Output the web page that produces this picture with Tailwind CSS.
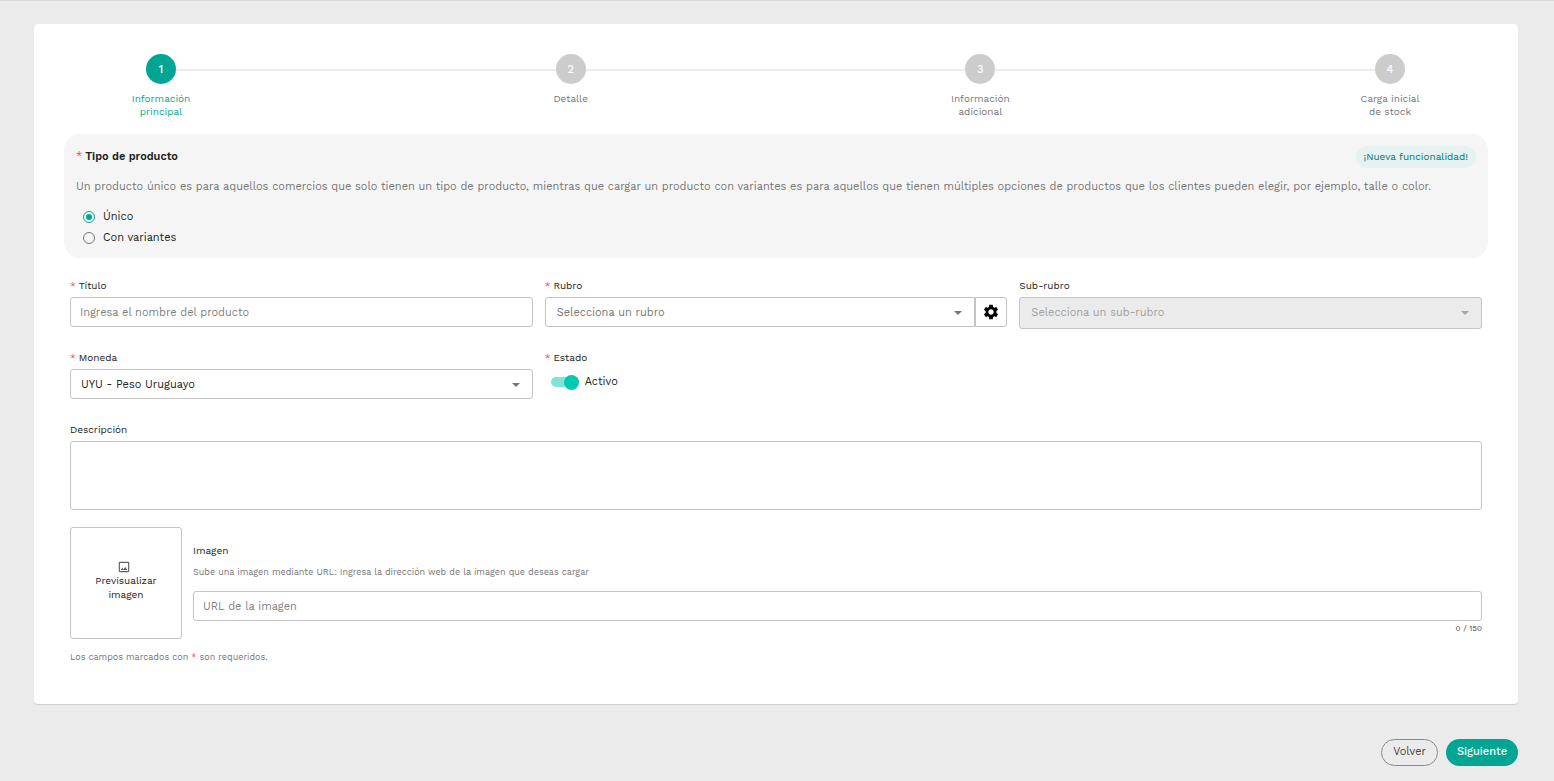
<!DOCTYPE html>
<html lang="es">
<head>
    <meta charset="UTF-8">
    <meta name="viewport" content="width=device-width, initial-scale=1.0">
    <title>Nuevo producto</title>
    <script src="https://cdn.jsdelivr.net/npm/@tailwindcss/browser@4"></script>
</head>
<body class="min-h-screen border-t border-[#dcdcdc] bg-[#ebebeb] pt-[23px] pr-9 pb-[15px] pl-[34px] font-['Work_Sans',Inter,sans-serif] text-[11px] leading-4 text-[#212121]">
    <form>
        <main class="rounded-[4px] bg-white px-[30px] pt-[30px] pb-[39px] shadow-[0_1px_1px_#cfcfcf]">
            <!-- Stepper -->
            <ol class="flex h-20 items-start pr-[66px] pl-[65px] text-center text-[10px] leading-[13px] text-[#757575]">
                <li class="flex w-16 flex-col items-center gap-2 text-[#00a693]" aria-current="step">
                    <span class="flex size-[30px] items-center justify-center rounded-full bg-[#00a693] text-[11px] font-medium text-white">1</span>
                    <span>Información principal</span>
                </li>
                <li class="-mx-[17px] mt-[15px] h-[2px] flex-1 bg-[#ebebf0]" aria-hidden="true"></li>
                <li class="flex w-16 flex-col items-center gap-2">
                    <span class="flex size-[30px] items-center justify-center rounded-full bg-[#cccccc] text-[11px] font-medium text-white">2</span>
                    <span>Detalle</span>
                </li>
                <li class="-mx-[17px] mt-[15px] h-[2px] flex-1 bg-[#ebebf0]" aria-hidden="true"></li>
                <li class="flex w-16 flex-col items-center gap-2">
                    <span class="flex size-[30px] items-center justify-center rounded-full bg-[#cccccc] text-[11px] font-medium text-white">3</span>
                    <span>Información adicional</span>
                </li>
                <li class="-mx-[17px] mt-[15px] h-[2px] flex-1 bg-[#ebebf0]" aria-hidden="true"></li>
                <li class="flex w-16 flex-col items-center gap-2">
                    <span class="flex size-[30px] items-center justify-center rounded-full bg-[#cccccc] text-[11px] font-medium text-white">4</span>
                    <span>Carga inicial de stock</span>
                </li>
            </ol>

            <!-- Tipo de producto -->
            <section class="rounded-2xl bg-[#f5f5f5] p-3">
                <div class="flex items-center justify-between">
                    <h2 class="font-semibold"><span class="mr-[3px] font-normal text-[#f5365c]">*</span>Tipo de producto</h2>
                    <span class="rounded-full bg-[#e5f2f1] px-2 py-[3px] text-[10px] text-[#00796b]">¡Nueva funcionalidad!</span>
                </div>
                <p class="mt-[11px] text-[#757575]">Un producto único es para aquellos comercios que solo tienen un tipo de producto, mientras que cargar un producto con variantes es para aquellos que tienen múltiples opciones de productos que los clientes pueden elegir, por ejemplo, talle o color.</p>
                <div class="mt-[14px] flex flex-col gap-[5px] pl-[7px]">
                    <label class="flex items-center gap-2">
                        <input type="radio" name="tipo" checked class="grid size-3 appearance-none place-content-center rounded-full border border-[#757575] before:size-1.5 before:rounded-full checked:border-[#00a693] checked:before:bg-[#00a693]">
                        <span>Único</span>
                    </label>
                    <label class="flex items-center gap-2">
                        <input type="radio" name="tipo" class="grid size-3 appearance-none place-content-center rounded-full border border-[#757575] before:size-1.5 before:rounded-full checked:border-[#00a693] checked:before:bg-[#00a693]">
                        <span>Con variantes</span>
                    </label>
                </div>
            </section>

            <!-- Datos del producto -->
            <div class="px-1.5 pt-5">
                <div class="grid grid-cols-3 items-start gap-x-3 gap-y-[23px]">
                    <div class="flex flex-col gap-[3px]">
                        <label for="titulo" class="text-[10px]"><span class="mr-[3px] text-[#f5365c]">*</span>Título</label>
                        <input id="titulo" type="text" placeholder="Ingresa el nombre del producto" class="h-[30px] w-full rounded-[3px] border border-[#c4c4c4] px-[9px] placeholder:text-[#808080]">
                    </div>
                    <div class="flex flex-col gap-[3px]">
                        <label for="rubro" class="text-[10px]"><span class="mr-[3px] text-[#f5365c]">*</span>Rubro</label>
                        <div class="flex">
                            <div class="relative flex-1">
                                <select id="rubro" class="h-[30px] w-full appearance-none rounded-l-[3px] border border-[#c4c4c4] px-[11px] pt-[2px] text-[#757575]">
                                    <option>Selecciona un rubro</option>
                                </select>
                                <svg class="pointer-events-none absolute top-[14px] right-[13px] h-1 w-2" viewBox="0 0 8 4" fill="#757575"><path d="M0 0h8L4 4z"/></svg>
                            </div>
                            <button type="button" aria-label="Configurar rubros" class="flex h-[30px] w-8 items-center justify-center rounded-r-[3px] border border-[#c4c4c4]">
                                <svg class="size-[18px]" viewBox="0 0 24 24" fill="#000"><path d="M19.14 12.94c.04-.3.06-.61.06-.94 0-.32-.02-.64-.07-.94l2.03-1.58a.49.49 0 0 0 .12-.61l-1.92-3.32a.488.488 0 0 0-.59-.22l-2.39.96c-.5-.38-1.03-.7-1.62-.94l-.36-2.54a.484.484 0 0 0-.48-.41h-3.84c-.24 0-.43.17-.47.41l-.36 2.54c-.59.24-1.13.57-1.62.94l-2.39-.96c-.22-.08-.47 0-.59.22L2.74 8.87c-.12.21-.08.47.12.61l2.03 1.58c-.05.3-.09.63-.09.94s.02.64.07.94l-2.03 1.58a.49.49 0 0 0-.12.61l1.92 3.32c.12.22.37.29.59.22l2.39-.96c.5.38 1.03.7 1.62.94l.36 2.54c.05.24.24.41.48.41h3.84c.24 0 .44-.17.47-.41l.36-2.54c.59-.24 1.13-.56 1.62-.94l2.39.96c.22.08.47 0 .59-.22l1.92-3.32c.12-.22.07-.47-.12-.61l-2.01-1.58zM12 15.6c-1.98 0-3.6-1.62-3.6-3.6s1.62-3.6 3.6-3.6 3.6 1.62 3.6 3.6-1.62 3.6-3.6 3.6z"/></svg>
                            </button>
                        </div>
                    </div>
                    <div class="flex flex-col gap-[3px]">
                        <label for="subrubro" class="text-[10px]">Sub-rubro</label>
                        <div class="relative -mb-[2px]">
                            <select id="subrubro" disabled class="h-8 w-full appearance-none rounded-[3px] border border-[#c4c4c4] bg-[#ebebeb] px-[11px] text-[#a0a0a0] opacity-100">
                                <option>Selecciona un sub-rubro</option>
                            </select>
                            <svg class="pointer-events-none absolute top-[14px] right-[13px] h-1 w-2" viewBox="0 0 8 4" fill="#a6a6a6"><path d="M0 0h8L4 4z"/></svg>
                        </div>
                    </div>

                    <div class="flex flex-col gap-[3px]">
                        <label for="moneda" class="text-[10px]"><span class="mr-[3px] text-[#f5365c]">*</span>Moneda</label>
                        <div class="relative">
                            <select id="moneda" class="h-[30px] w-full appearance-none rounded-[3px] border border-[#c4c4c4] px-[10px] pt-[2px]">
                                <option>UYU - Peso Uruguayo</option>
                            </select>
                            <svg class="pointer-events-none absolute top-[14px] right-[13px] h-1 w-2" viewBox="0 0 8 4" fill="#757575"><path d="M0 0h8L4 4z"/></svg>
                        </div>
                    </div>
                    <div class="flex flex-col gap-[3px]">
                        <label for="estado" class="text-[10px]"><span class="mr-[3px] text-[#f5365c]">*</span>Estado</label>
                        <label class="flex h-[26px] items-center gap-1.5 pl-1.5">
                            <input id="estado" type="checkbox" role="switch" checked class="flex h-[10px] w-7 appearance-none items-center rounded-full bg-[#bdbdbd] before:size-[15px] before:shrink-0 before:rounded-full before:bg-[#757575] checked:justify-end checked:bg-[#80e5d9] checked:before:bg-[#00c9b1]">
                            <span>Activo</span>
                        </label>
                    </div>
                </div>

                <div class="mt-[23px] flex flex-col gap-[3px]">
                    <label for="descripcion" class="text-[10px]">Descripción</label>
                    <textarea id="descripcion" class="h-[69px] w-full resize-none rounded-[3px] border border-[#c4c4c4] px-[9px] py-2"></textarea>
                </div>

                <!-- Imagen -->
                <div class="mt-[17px] flex items-start gap-[11px]">
                    <div class="flex size-28 shrink-0 flex-col items-center justify-center rounded-[3px] border border-[#c4c4c4] px-5 pb-1 text-center text-[10px] leading-[14px]">
                        <svg class="mr-1 size-[14px]" viewBox="0 0 24 24" fill="#616161"><path d="M19 5v14H5V5h14m0-2H5c-1.100 0-2 .9-2 2v14c0 1.100.9 2 2 2h14c1.100 0 2-.9 2-2V5c0-1.100-.9-2-2-2zm-4.860 8.860l-3 3.870L9 13.140 6 17h12l-3.860-5.140z"/></svg>
                        Previsualizar imagen
                    </div>
                    <div class="flex flex-1 flex-col pt-4">
                        <label for="url" class="text-[10px]">Imagen</label>
                        <p class="mt-[5px] text-[9px] text-[#757575]">Sube una imagen mediante URL: Ingresa la dirección web de la imagen que deseas cargar</p>
                        <input id="url" type="text" maxlength="150" placeholder="URL de la imagen" class="mt-[11px] h-[30px] w-full rounded-[3px] border border-[#c4c4c4] px-[9px] placeholder:text-[#808080]">
                        <span class="self-end text-[8px] text-[#424242]">0 / 150</span>
                    </div>
                </div>

                <p class="mt-[10px] text-[9px] text-[#757575]">Los campos marcados con <span class="text-[#f5365c]">*</span> son requeridos.</p>
            </div>
        </main>

        <!-- Acciones -->
        <div class="mt-[35px] flex justify-end gap-2">
            <button type="button" class="h-[27px] rounded-full border border-[#8a8a8a] px-[11px] pb-[2px] text-[#424242]">Volver</button>
            <button type="submit" class="h-[27px] rounded-full bg-[#00a693] px-[11px] pb-[2px] font-medium text-white">Siguiente</button>
        </div>
    </form>
</body>
</html>
